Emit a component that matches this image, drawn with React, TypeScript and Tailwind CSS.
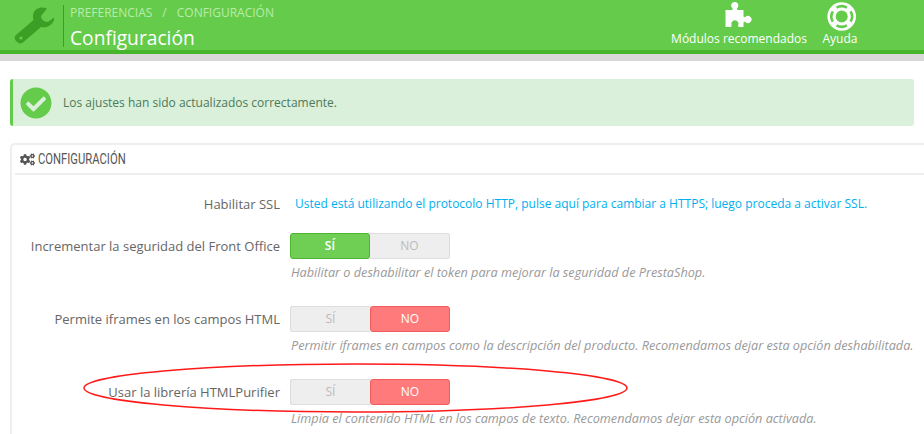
import { FaCheckCircle, FaCogs } from 'react-icons/fa'

function Toggle({ on }: { on: boolean }) {
  return (
    <div className="flex h-[26px] w-[160px] rounded-[3px] bg-[#eeeeee] text-[12px] font-semibold leading-[24px] text-center">
      <div
        className={
          on
            ? 'w-[80px] rounded-[3px] border border-[#4fb52f] bg-[#6fcf55] text-white'
            : 'w-[80px] rounded-l-[3px] border border-r-0 border-[#dddddd] font-normal text-[#bbbbbb]'
        }
      >
        SÍ
      </div>
      <div
        className={
          on
            ? 'w-[80px] rounded-r-[3px] border border-l-0 border-[#dddddd] font-normal text-[#bbbbbb]'
            : 'w-[80px] rounded-[3px] border border-[#f25c5c] bg-[#ff7b7b] font-medium text-white'
        }
      >
        NO
      </div>
    </div>
  )
}

function SwitchRow({ label, on, help, className }: { label: string; on: boolean; help: string; className: string }) {
  return (
    <div className={'flex ' + className}>
      <div className="w-[268px] shrink-0 pt-[4px] text-right text-[13px] leading-[18px] text-[#666666]">{label}</div>
      <div className="ml-[10px] min-w-0">
        <Toggle on={on} />
        <div className="mt-[4px] whitespace-nowrap pl-[1px] text-[12.68px] italic leading-[18px] text-[#999999]">{help}</div>
      </div>
    </div>
  )
}

function WrenchIcon() {
  return (
    <svg width="50" height="48" viewBox="0 0 50 48" className="ml-[10px] mt-[2px]">
      <path
        fill="#3c9f25"
        d="M37 6.5C33 4.5 26 5 23.5 11C22.5 14 23 16.5 23.5 18L6 33C4 35 4.5 37 6 39L8 40.5C10 42 12 41.5 13.5 40L31 25C36 26 41 24 43 20C44 18.5 44.5 17 44 15.5L38 20C34 20 31 17 31 14Z"
      />
      <circle cx="11" cy="36" r="1.6" fill="#65cb4b" />
    </svg>
  )
}

function PuzzleIcon() {
  return (
    <svg width="40" height="31" viewBox="-1 0 40 31">
      <path
        fill="#ffffff"
        d="M5.5 10H11.5C12.5 10 13 9 12.5 8.3A3.6 3.6 0 1 1 17 8.3C16.5 9 17 10 18 10H23.5V16C23.5 17 24.5 17.5 25.5 16.8A3.6 3.6 0 1 1 25.5 22.2C24.5 21.5 23.5 22 23.5 23V27H19C18 27 18 26 18.3 25A3.6 3.6 0 1 0 11.5 25C11.8 26 11.5 27 10.5 27H5.5Z"
      />
    </svg>
  )
}

function LifeRingIcon() {
  return (
    <svg width="40" height="31" viewBox="0 0 40 31">
      <circle cx="21.7" cy="16.5" r="14.3" fill="#ffffff" />
      <circle cx="21.7" cy="16.5" r="6" fill="#65cb4b" />
      <circle
        cx="21.7"
        cy="16.5"
        r="10.3"
        fill="none"
        stroke="#65cb4b"
        strokeWidth="2.6"
        pathLength={360}
        strokeDasharray="60 30"
        transform="rotate(-30 21.7 16.5)"
      />
    </svg>
  )
}

export default function App() {
  return (
    <div className="relative h-[434px] w-[924px] overflow-hidden bg-white font-['Open_Sans',sans-serif]">
      <header className="flex h-[54px] border-b-4 border-[#46b52b] bg-[#65cb4b] text-white">
        <div className="w-[63px] shrink-0">
          <WrenchIcon />
        </div>
        <div className="mt-[5px] h-[42px] flex-1 border-l border-[#3c9f25] pl-[6px]">
          <div className="flex text-[12px] leading-[16px] text-[#b9ebaa]">
            <span>PREFERENCIAS</span>
            <span className="mx-[10px]">/</span>
            <span>CONFIGURACIÓN</span>
          </div>
          <div className="mt-[3px] text-[19.2px] leading-[27px]">Configuración</div>
        </div>
        <div className="flex pr-[64px] text-[12px] font-medium">
          <div className="flex flex-col items-center">
            <PuzzleIcon />
            <span className="leading-[16px]">Módulos recomendados</span>
          </div>
          <div className="ml-[13px] flex flex-col items-center">
            <LifeRingIcon />
            <span className="leading-[16px]">Ayuda</span>
          </div>
        </div>
      </header>
      <div className="h-[7px] bg-[#d8d8d8]" />

      <main className="px-[10px] pt-[18px]">
        <div className="flex h-[47px] items-center rounded-[3px] border-l-[3px] border-[#65cb4b] bg-[#daf0da] pl-[7px] text-[12px] text-[#4d7a5a]">
          <FaCheckCircle size={32} className="text-[#65cb4b]" />
          <span className="ml-[11px]">Los ajustes han sido actualizados correctamente.</span>
        </div>

        <section className="mt-[17px] h-[320px] w-[940px] rounded-[5px] border-2 border-[#eeeeee]">
          <div className="mx-[3px] flex h-[30px] items-center gap-[3px] border-b-2 border-[#eeeeee] pl-[5px] font-['Roboto',sans-serif] text-[15px] text-[#555555]">
            <FaCogs size={15} />
            <span className="origin-left scale-x-[0.75]">CONFIGURACIÓN</span>
          </div>

          <div className="mt-[20px] flex text-[13px] leading-[18px]">
            <div className="w-[268px] shrink-0 text-right text-[#666666]">Habilitar SSL</div>
            <div className="ml-[15px] whitespace-nowrap text-[12px] text-[#00aff0]">
              Usted está utilizando el protocolo HTTP, pulse aquí para cambiar a HTTPS; luego proceda a activar SSL.
            </div>
          </div>

          <SwitchRow
            className="mt-[20px]"
            label="Incrementar la seguridad del Front Office"
            on
            help="Habilitar o deshabilitar el token para mejorar la seguridad de PrestaShop."
          />
          <SwitchRow
            className="mt-[25px]"
            label="Permite iframes en los campos HTML"
            on={false}
            help="Permitir iframes en campos como la descripción del producto. Recomendamos dejar esta opción deshabilitada."
          />
          <SwitchRow
            className="mt-[25px]"
            label="Usar la librería HTMLPurifier"
            on={false}
            help="Limpia el contenido HTML en los campos de texto. Recomendamos dejar esta opción activada."
          />
        </section>
      </main>

      {/* hand drawn annotation over the page */}
      <svg className="pointer-events-none absolute left-0 top-0" width="924" height="434" fill="none">
        <ellipse cx="355.5" cy="388" rx="271.5" ry="24" stroke="#ff1a1a" strokeWidth="1.5" />
      </svg>
    </div>
  )
}
